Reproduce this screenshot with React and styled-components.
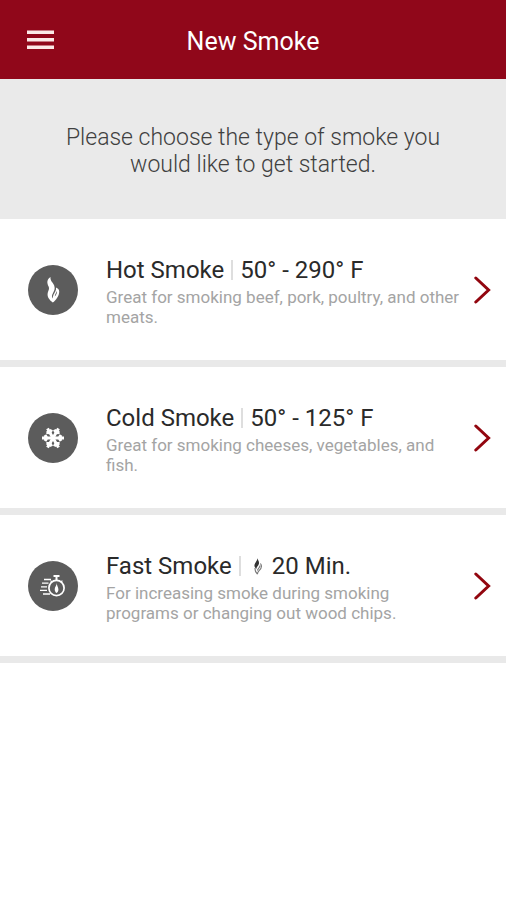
import React from "react";
import styled, { createGlobalStyle } from "styled-components";

const GlobalStyle = createGlobalStyle`
  * {
    box-sizing: border-box;
  }

  body {
    margin: 0;
    background: #fff;
    font-family: Roboto, "Liberation Sans", sans-serif;
  }
`;

const Header = styled.header`
  display: grid;
  grid-template-columns: 80px 1fr 80px;
  align-items: center;
  height: 79px;
  background: #90071a;
  color: #fff;
`;

const MenuButton = styled.button`
  display: flex;
  justify-content: center;
  padding: 0;
  border: 0;
  background: none;
  color: #fbe9e7;
  cursor: pointer;
`;

const Title = styled.h1`
  margin: 0;
  padding-top: 4px;
  font-size: 25px;
  font-weight: 400;
  line-height: 32px;
  text-align: center;
`;

const Intro = styled.p`
  margin: 0;
  padding: 45px 56px 41px;
  background: #eaeaea;
  color: #404040;
  font-size: 23px;
  font-weight: 300;
  line-height: 27px;
  text-align: center;
`;

const List = styled.ul`
  margin: 0;
  padding: 0;
  list-style: none;
`;

const Item = styled.li`
  border-bottom: 7px solid #e9e9e9;
`;

const Link = styled.a`
  display: flex;
  align-items: center;
  min-height: 141px;
  padding: 0 13px 0 28px;
  color: inherit;
  text-decoration: none;
`;

const Badge = styled.span`
  display: flex;
  flex: none;
  align-items: center;
  justify-content: center;
  width: 50px;
  height: 50px;
  border-radius: 50%;
  background: #5c5c5c;
  color: #fff;
`;

const Body = styled.div`
  flex: 1;
  margin: 0 11px 0 28px;
`;

const Name = styled.h2`
  display: flex;
  align-items: center;
  margin: 0;
  color: #2a2a2a;
  font-size: 24px;
  font-weight: 400;
  line-height: 34px;
`;

const Divider = styled.span`
  width: 2px;
  height: 20px;
  margin: 0 7px;
  background: #dedede;
`;

const Setting = styled.span`
  display: flex;
  align-items: center;
  gap: 9px;

  svg {
    margin-left: 5px;
  }
`;

const Description = styled.p`
  margin: 0;
  color: #a4a4a4;
  font-size: 17px;
  line-height: 20px;
`;

const MenuIcon = () => (
  <svg width="27" height="20" viewBox="0 0 27 20" fill="currentColor">
    <path d="M0 0.5h27v3.6H0zM0 8h27v3.6H0zM0 15.4h27V19H0z" />
  </svg>
);

const FlameIcon = () => (
  <svg width="14" height="26" viewBox="0 0 14 26" fill="currentColor">
    <path d="M4.500 0C.6 2.600.8 6 2.600 9.400 3.800 12 2 13.600 1.600 16.800c-.4 3.400 2 6.400 5.200 8.800 3-2.400 6.600-6.800 6.400-11.400-.1-1.900-1.300-3-3.200-3.800.6 3-1.400 4.600-2.400 7.200-.5 1.200-.9 2.600-1 3.900-1-1.900-.7-3.300.2-5.100 1.400-2.800 2.600-4.800 1.400-8C7.200 5.600 4 4 4.500 0zM10.800 14c.7 1.600-.6 4-2 5.500.1-2.200 1.400-3.500 2-5.500z" />
  </svg>
);

const SnowflakeIcon = () => (
  <svg
    width="24"
    height="24"
    viewBox="-12 -12 24 24"
    fill="none"
    stroke="currentColor"
    strokeWidth="3"
    strokeLinejoin="round"
  >
    {[0, 60, 120, 180, 240, 300].map((angle) => (
      <path
        key={angle}
        transform={`rotate(${angle})`}
        d="M0 0H11M8-3 6 0 8 3"
      />
    ))}
  </svg>
);

const StopwatchIcon = () => (
  <svg
    width="28"
    height="24"
    viewBox="0 0 28 24"
    fill="none"
    stroke="currentColor"
    strokeWidth="1.300"
  >
    <circle cx="17.500" cy="14" r="7.600" strokeWidth="1.700" />
    <path d="M17.500 6.400V2.500M14.500 2h6" strokeWidth="2" />
    <path d="M11.600 6.600l1.300 1.300M23.400 6.600l-1.300 1.300" />
    <path d="M5 5.500h7M3 9.200h6.500M2 12.800h6M1 16.400h7M4 20h7" />
    <path
      d="M17.600 8.800c.5 2.600-1.900 4-1.900 6.500 0 1.900.8 3 1.800 3.800 1-.8 1.900-1.900 1.900-3.600 0-2.500-1.800-4-1.800-6.700z"
      fill="currentColor"
      stroke="none"
    />
  </svg>
);

const WispIcon = () => (
  <svg width="10" height="18" viewBox="0 0 10 18">
    <path
      d="M4.500 0c-.5 2.600 2 4 1.500 6.600-.3 2-2.700 3.200-2.700 5.400C2.200 10.600 1 9.400 1.600 7.400 2.200 5.400 4.600 3.800 4.500 0z"
      fill="#333"
    />
    <path
      d="M7.400 6.500c1.900 2.500 1 5-1.300 7.100-1 .9-1.600 2-1.700 3.600M2 11c-.1 2.400.6 4.400 2.400 6.200M7 8.500c0 2-2 3-2.600 5"
      fill="none"
      stroke="#777"
      strokeWidth="1.100"
    />
  </svg>
);

const ChevronIcon = () => (
  <svg width="20" height="28" viewBox="0 0 20 28">
    <path
      d="M2.800 2 15.600 14 2.800 26"
      fill="none"
      stroke="#92060f"
      strokeWidth="3"
      strokeLinecap="round"
    />
  </svg>
);

const smokes = [
  {
    id: "hot",
    name: "Hot Smoke",
    setting: "50° - 290° F",
    description: "Great for smoking beef, pork, poultry, and other meats.",
    icon: <FlameIcon />,
  },
  {
    id: "cold",
    name: "Cold Smoke",
    setting: "50° - 125° F",
    description: "Great for smoking cheeses, vegetables, and fish.",
    icon: <SnowflakeIcon />,
  },
  {
    id: "fast",
    name: "Fast Smoke",
    setting: "20 Min.",
    settingIcon: <WispIcon />,
    description:
      "For increasing smoke during smoking programs or changing out wood chips.",
    icon: <StopwatchIcon />,
  },
];

const SmokeItem = ({ smoke }) => (
  <Item>
    <Link href={`#${smoke.id}`}>
      <Badge>{smoke.icon}</Badge>
      <Body>
        <Name>
          {smoke.name}
          <Divider />
          <Setting>
            {smoke.settingIcon}
            {smoke.setting}
          </Setting>
        </Name>
        <Description>{smoke.description}</Description>
      </Body>
      <ChevronIcon />
    </Link>
  </Item>
);

const App = () => (
  <>
    <GlobalStyle />
    <Header>
      <MenuButton aria-label="Menu">
        <MenuIcon />
      </MenuButton>
      <Title>New Smoke</Title>
    </Header>
    <main>
      <Intro>Please choose the type of smoke you would like to get started.</Intro>
      <List>
        {smokes.map((smoke) => (
          <SmokeItem key={smoke.id} smoke={smoke} />
        ))}
      </List>
    </main>
  </>
);

export default App;
